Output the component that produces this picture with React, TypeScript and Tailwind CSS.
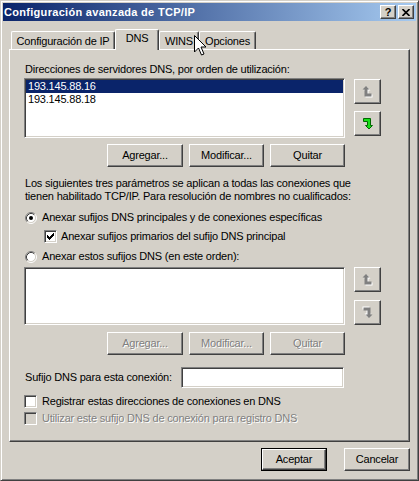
import React from 'react'

const raised =
  'border border-t-white border-l-white border-r-[#404040] border-b-[#404040] shadow-[inset_-1px_-1px_#808080] bg-[#d4d0c8]'
const sunken =
  'border border-t-[#808080] border-l-[#808080] border-r-white border-b-white shadow-[inset_1px_1px_#404040,inset_-1px_-1px_#d4d0c8]'
const grayText = 'text-[#808080] [text-shadow:1px_1px_0_#ffffff]'

function Button({ label, w, disabled }: { label: string; w: string; disabled?: boolean }) {
  return (
    <div className={`${raised} ${w} h-[23px] flex items-center justify-center ${disabled ? grayText : ''}`}>
      {label}
    </div>
  )
}

function BendArrow({ down, enabled }: { down?: boolean; enabled?: boolean }) {
  const pts = '3.5,0.5 7,4 5,4 5,8 9,8 9,11 2,11 2,4 0,4'
  return (
    <svg width="11" height="13" viewBox="-0.5 -0.5 11 13" className={down ? 'rotate-180' : ''}>
      {enabled ? (
        <polygon points={pts} fill="#18e018" stroke="#006800" strokeWidth="1" />
      ) : (
        <>
          <polygon points={pts} transform="translate(1 1)" fill="#ffffff" />
          <polygon points={pts} fill="#808080" />
        </>
      )}
    </svg>
  )
}

function ArrowBtn({ down, enabled }: { down?: boolean; enabled?: boolean }) {
  return (
    <div className={`${raised} w-[27px] h-[25px] flex items-center justify-center`}>
      <BendArrow down={down} enabled={enabled} />
    </div>
  )
}

function Radio({ checked }: { checked?: boolean }) {
  return (
    <svg width="12" height="12" viewBox="0 0 12 12">
      <circle cx="6" cy="6" r="4.5" fill="#ffffff" />
      <path d="M2.11 9.89 A5.5 5.5 0 0 1 9.89 2.11" stroke="#808080" fill="none" />
      <path d="M9.89 2.11 A5.5 5.5 0 0 1 2.11 9.89" stroke="#ffffff" fill="none" />
      <path d="M2.82 9.18 A4.5 4.5 0 0 1 9.18 2.82" stroke="#404040" fill="none" />
      <path d="M9.18 2.82 A4.5 4.5 0 0 1 2.82 9.18" stroke="#d4d0c8" fill="none" />
      {checked && <circle cx="6" cy="6" r="2" fill="#000000" />}
    </svg>
  )
}

function Check({ checked, disabled }: { checked?: boolean; disabled?: boolean }) {
  return (
    <div className={`${sunken} w-[13px] h-[13px] flex items-center justify-center shrink-0 ${disabled ? 'bg-[#d4d0c8]' : 'bg-white'}`}>
      {checked && (
        <svg width="7" height="7" viewBox="0 0 7 7" shapeRendering="crispEdges">
          <polygon points="0,2 2,4 7,-1 7,2 2,7 0,5" fill="#000000" />
        </svg>
      )}
    </div>
  )
}

function Tab({ label, w, active }: { label: string; w: string; active?: boolean }) {
  return (
    <div
      className={`${w} border-t border-l border-r border-t-white border-l-white border-r-[#404040] shadow-[inset_-1px_0_#808080] rounded-tl-[2px] rounded-tr-[2px] bg-[#d4d0c8] flex justify-center ${
        active ? 'h-[21px] pt-[2px] relative z-10' : 'h-[19px] pt-[3px]'
      }`}
    >
      {label}
    </div>
  )
}

export default function App() {
  return (
    <div className="relative w-[419px] h-[481px] bg-[#d4d0c8] border border-[#d4d0c8] border-r-[#404040] border-b-[#404040] shadow-[inset_1px_1px_#ffffff,inset_-1px_-1px_#808080] p-[2px] flex flex-col font-['Liberation_Sans',Arial,sans-serif] text-[11px] leading-[13px] tracking-[-0.2px] text-black overflow-hidden">
      {/* Title bar */}
      <div className="h-[18px] flex items-center bg-[linear-gradient(to_right,#0a246a,#a6caf0)] pl-[1px] pr-[2px]">
        <span className="flex-1 font-bold text-white tracking-[0.3px]">Configuración avanzada de TCP/IP</span>
        <div className="flex gap-[2px]">
          <div className={`${raised} w-[16px] h-[14px] flex items-center justify-center font-bold text-[11px] leading-[11px]`}>?</div>
          <div className={`${raised} w-[16px] h-[14px] flex items-center justify-center`}>
            <svg width="8" height="7" viewBox="0 0 8 7">
              <path d="M0.5 0 L7.5 7 M7.5 0 L0.5 7" stroke="#000000" strokeWidth="1.6" />
            </svg>
          </div>
        </div>
      </div>

      {/* Tabs */}
      <div className="mt-[8px] ml-[8px] flex items-end h-[21px]">
        <Tab label="Configuración de IP" w="w-[104px]" />
        <Tab label="DNS" w="w-[44px]" active />
        <Tab label="WINS" w="w-[40px]" />
        <Tab label="Opciones" w="w-[57px]" />
      </div>

      {/* Tab page */}
      <div className="mx-[6px] mt-[-1px] h-[393px] border border-t-white border-l-white border-r-[#404040] border-b-[#404040] shadow-[inset_-1px_-1px_#808080] pl-[14px] pt-[13px] flex flex-col">
        <div className="pl-[1px]">Direcciones de servidores DNS, por orden de utilización:</div>
        <div className="flex mt-[2px]">
          <div className={`${sunken} bg-white w-[321px] h-[60px] pt-[1px] pl-[1px] pr-[1px]`}>
            <div className="h-[13px] px-[2px] bg-[#0a246a] text-white">193.145.88.16</div>
            <div className="h-[13px] px-[2px]">193.145.88.18</div>
          </div>
          <div className="ml-[9px] pt-[1px] flex flex-col gap-[7px]">
            <ArrowBtn />
            <ArrowBtn down enabled />
          </div>
        </div>
        <div className="flex justify-end gap-[6px] w-[321px] mt-[6px]">
          <Button label="Agregar..." w="w-[76px]" />
          <Button label="Modificar..." w="w-[75px]" />
          <Button label="Quitar" w="w-[75px]" />
        </div>

        <div className="mt-[10px] pl-[1px] whitespace-nowrap">
          <div>Los siguientes tres parámetros se aplican a todas las conexiones que</div>
          <div>tienen habilitado TCP/IP. Para resolución de nombres no cualificados:</div>
        </div>

        <div className="mt-[8px] h-[13px] flex items-center pl-[1px]">
          <Radio checked />
          <span className="ml-[5px]">Anexar sufijos DNS principales y de conexiones específicas</span>
        </div>
        <div className="mt-[6px] h-[13px] flex items-center pl-[20px]">
          <Check checked />
          <span className="ml-[4px]">Anexar sufijos primarios del sufijo DNS principal</span>
        </div>
        <div className="mt-[7px] h-[13px] flex items-center pl-[1px]">
          <Radio />
          <span className="ml-[5px]">Anexar estos sufijos DNS (en este orden):</span>
        </div>

        <div className="flex mt-[4px]">
          <div className={`${sunken} bg-white w-[321px] h-[58px]`} />
          <div className="ml-[9px] flex flex-col gap-[8px]">
            <ArrowBtn />
            <ArrowBtn down />
          </div>
        </div>
        <div className="flex justify-end gap-[6px] w-[321px] mt-[7px]">
          <Button label="Agregar..." w="w-[76px]" disabled />
          <Button label="Modificar..." w="w-[75px]" disabled />
          <Button label="Quitar" w="w-[75px]" disabled />
        </div>

        <div className="mt-[12px] h-[21px] flex items-center">
          <span className="w-[157px] pl-[1px]">Sufijo DNS para esta conexión:</span>
          <div className={`${sunken} bg-white w-[163px] h-[21px]`} />
        </div>
        <div className="mt-[7px] h-[13px] flex items-center">
          <Check />
          <span className="ml-[5px]">Registrar estas direcciones de conexiones en DNS</span>
        </div>
        <div className="mt-[4px] h-[13px] flex items-center">
          <Check disabled />
          <span className={`ml-[5px] ${grayText}`}>Utilizar este sufijo DNS de conexión para registro DNS</span>
        </div>
      </div>

      {/* Dialog buttons */}
      <div className="mt-[6px] flex justify-end gap-[17px] pr-[6px]">
        <div className="border border-black w-[66px] h-[23px]">
          <div className={`${raised} w-full h-full flex items-center justify-center`}>Aceptar</div>
        </div>
        <Button label="Cancelar" w="w-[66px]" />
      </div>

      {/* Mouse pointer */}
      <svg className="absolute left-[193px] top-[34px]" width="13" height="22" viewBox="0 0 13 22">
        <path d="M0.5 0.5 L0.5 17 L4.5 13 L7.5 20 L10 19 L7 12 L12 12 Z" fill="#ffffff" stroke="#000000" strokeWidth="1" />
      </svg>
    </div>
  )
}
